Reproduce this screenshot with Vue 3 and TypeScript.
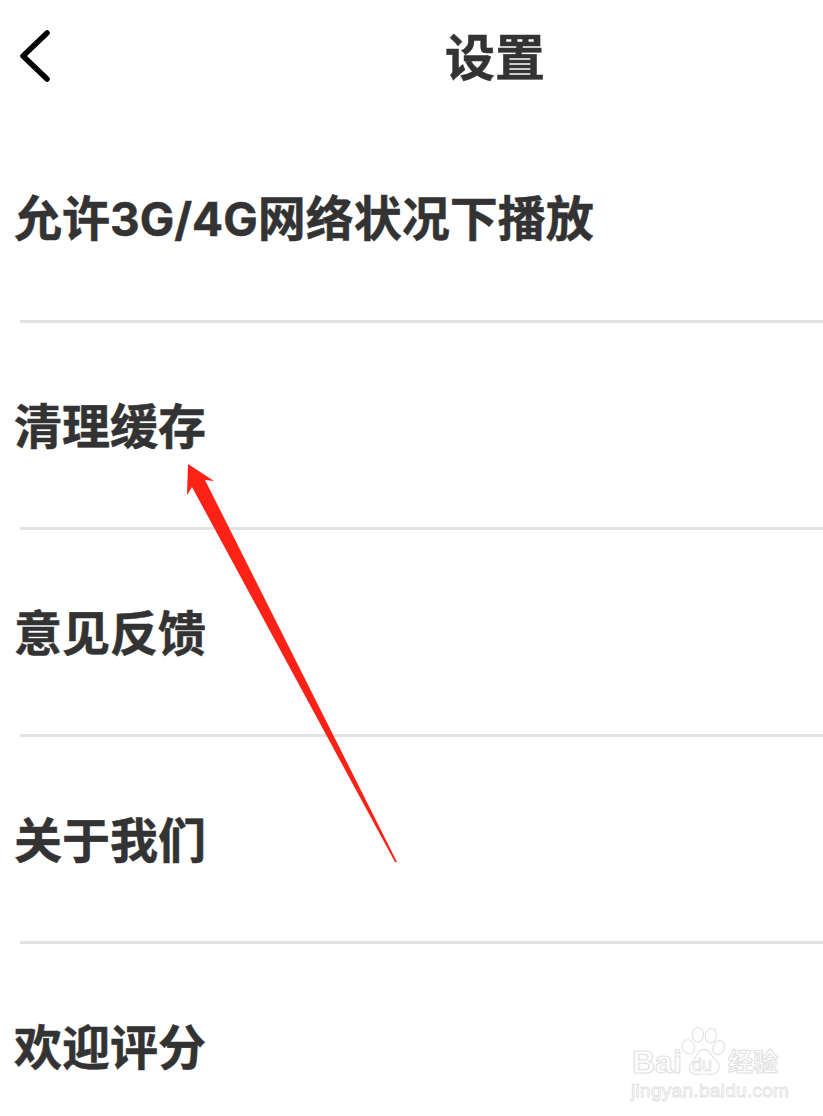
<script setup lang="ts">
const rows: string[] = ['允许3G/4G网络状况下播放', '清理缓存', '意见反馈', '关于我们', '欢迎评分']
const parts = (row: string): string[] => row.split(/([0-9A-Z/]+)/)
</script>

<template>
  <div class="page">
    <header class="header">
      <svg class="back" width="34" height="58" viewBox="0 0 34 58">
        <path d="M29 5 L5 28 L29 51" fill="none" stroke="#000" stroke-width="5.5" stroke-linecap="round" stroke-linejoin="round" />
      </svg>
      <h1 class="title">设置</h1>
    </header>
    <ul class="list">
      <li v-for="row in rows" :key="row" class="row">
        <span class="label"><span v-for="(part, i) in parts(row)" :key="i" :class="{ latin: i % 2 === 1 }">{{ part }}</span></span>
      </li>
    </ul>

    <svg class="arrow" width="823" height="1116" viewBox="0 0 823 1116">
      <path d="M188 464 L214 481 L205 480 L397 862 L395 862 L192 487 L187 495 Z" fill="#fe2116" />
    </svg>

    <div class="mark">
      <div class="mark-top">
        <span class="bai">Bai</span>
        <svg class="paw" width="46" height="50" viewBox="-4 0 52 58">
          <g fill="#fff" stroke="#e2e2e2" stroke-width="1.3">
            <ellipse cx="4" cy="23" rx="7" ry="8.5" transform="rotate(-25 4 23)" />
            <ellipse cx="15" cy="9" rx="6.5" ry="8.5" />
            <ellipse cx="30" cy="10" rx="6.5" ry="8.5" transform="rotate(10 30 10)" />
            <ellipse cx="39" cy="24" rx="6.5" ry="8.5" transform="rotate(25 39 24)" />
            <path d="M22 26 C30 26 30 35 37 40 C43 46 38 56 28 55 C24 54 20 54 16 55 C5 56 2 47 8 41 C13 36 14 26 22 26 Z" />
          </g>
        </svg>
        <span class="du">du</span>
        <span class="jy">经验</span>
      </div>
      <div class="url">jingyan.baidu.com</div>
    </div>
  </div>
</template>

<style scoped>
.page {
  position: relative;
  width: 823px;
  height: 1116px;
  overflow: hidden;
  background: #fff;
  font-family: "Noto Sans CJK SC", "Noto Sans", sans-serif;
}
.header {
  position: relative;
  height: 116px;
  display: flex;
  align-items: center;
  justify-content: center;
}
.back {
  position: absolute;
  left: 18px;
  top: 28px;
}
.title {
  margin: 0 0 9px 167px;
  font-size: 50px;
  font-weight: 700;
  color: #333;
  line-height: 1;
  -webkit-text-stroke: 0.5px #333;
}
.list {
  list-style: none;
  margin: 0;
  padding: 0;
}
.row {
  height: 207px;
  display: flex;
  align-items: center;
  padding: 0 0 7px 14px;
  box-sizing: border-box;
  position: relative;
}
.row:not(:last-child)::after {
  content: "";
  position: absolute;
  left: 20px;
  right: 0;
  bottom: 0;
  height: 3px;
  background: #e2e2e2;
}
.label {
  font-size: 48px;
  font-weight: 700;
  color: #333;
  line-height: 1;
  white-space: nowrap;
  -webkit-text-stroke: 0.5px #333;
}
.latin {
  font-family: Inter, sans-serif;
  font-size: 46px;
}
.arrow {
  position: absolute;
  left: 0;
  top: 0;
  pointer-events: none;
}
.mark {
  position: absolute;
  left: 632px;
  top: 1026px;
  width: 150px;
  font-family: "Liberation Sans", sans-serif;
  color: #fff;
  -webkit-text-stroke: 1.2px #e2e2e2;
}
.mark-top {
  position: relative;
  height: 54px;
}
.bai {
  position: absolute;
  left: 0;
  top: 22px;
  font-size: 32px;
  font-weight: 700;
  line-height: 28px;
}
.paw {
  position: absolute;
  left: 49px;
  top: 1px;
}
.du {
  position: absolute;
  left: 60px;
  top: 30px;
  font-size: 18px;
  line-height: 1;
  -webkit-text-stroke: 0.8px #e2e2e2;
}
.jy {
  position: absolute;
  left: 96px;
  top: 22px;
  font-family: "Noto Sans CJK SC", sans-serif;
  font-size: 25px;
  font-weight: 700;
  line-height: 1;
  white-space: nowrap;
}
.url {
  position: absolute;
  top: 55px;
  left: -1px;
  font-size: 19px;
  line-height: 1.1;
  white-space: nowrap;
  letter-spacing: 0.3px;
  -webkit-text-stroke: 0.9px #e2e2e2;
}
</style>
